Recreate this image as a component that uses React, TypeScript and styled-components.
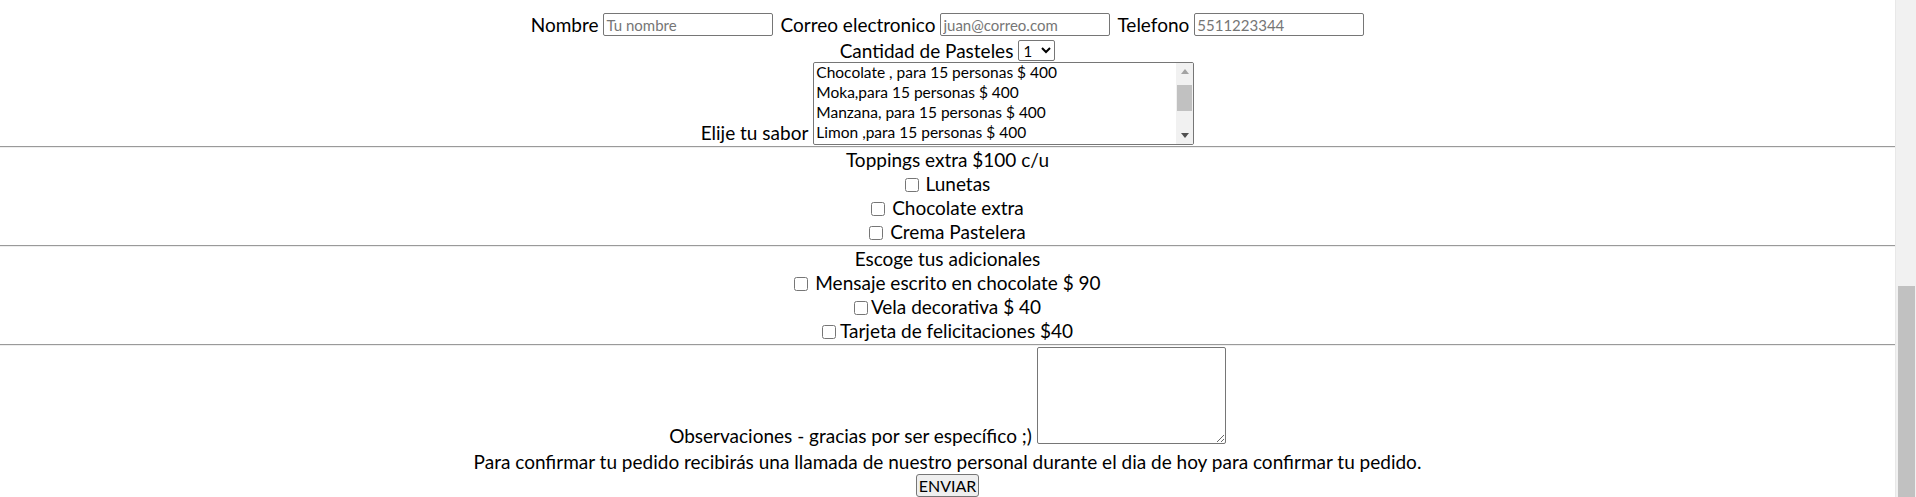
import React from "react";
import styled, { createGlobalStyle } from "styled-components";

const GlobalStyle = createGlobalStyle`
  html, body {
    margin: 0;
    padding: 0;
    height: 100%;
    overflow: hidden;
    background: #ffffff;
  }
  body {
    font-family: Lato, "Open Sans", sans-serif;
    color: #000000;
  }
`;

const Page = styled.div`
  display: flex;
  height: 497px;
`;

const Form = styled.form`
  flex: 1;
  display: flex;
  flex-direction: column;
  padding-top: 13px;
  font-size: 19px;
  text-align: center;
`;

const Row = styled.div<{ $align?: string; $top?: number }>`
  display: flex;
  justify-content: center;
  align-items: ${(p) => p.$align || "center"};
  margin-top: ${(p) => p.$top || 0}px;
`;

const Label = styled.label`
  margin-right: 5px;
  line-height: 20px;
`;

const TextInput = styled.input`
  width: 170px;
  height: 23px;
  box-sizing: border-box;
  border: 1px solid #767676;
  border-radius: 2px;
  padding: 1px 2px;
  margin: 0 7px 0 0;
  font-family: Lato, sans-serif;
  font-size: 15px;
  color: #000;

  &::placeholder {
    color: #767676;
  }

  &:last-child {
    margin-right: 0;
  }
`;

const Select = styled.select`
  height: 21px;
  width: 37px;
  font-family: Lato, sans-serif;
  font-size: 15px;
  border: 1px solid #767676;
  border-radius: 2px;
  background: #fff;
  color: #000;
  padding: 0;
`;

// listbox + its own little scrollbar
const ListFrame = styled.div`
  width: 381px;
  height: 83px;
  box-sizing: border-box;
  border: 1px solid #767676;
  border-radius: 2px;
  display: flex;
  overflow: hidden;
  background: #fff;
`;

const ListBox = styled.select`
  flex: 1;
  height: 100%;
  font-family: Lato, sans-serif;
  font-size: 15.5px;
  border: none;
  outline: none;
  padding: 0;
  overflow: hidden;
  text-align: left;

  option {
    line-height: 20px;
    padding: 0 2px;
    min-height: 20px;
  }
`;

const ListScroll = styled.div`
  width: 17px;
  background: #f1f1f1;
  display: flex;
  flex-direction: column;
  align-items: center;
`;

const ScrollButton = styled.div`
  width: 17px;
  height: 17px;
  display: flex;
  align-items: center;
  justify-content: center;
  flex: none;
`;

const ListTrack = styled.div`
  flex: 1;
  width: 100%;
  display: flex;
  justify-content: center;
`;

const ListThumb = styled.div`
  margin-top: 5px;
  width: 15px;
  height: 26px;
  background: #c1c1c1;
`;

const Divider = styled.hr`
  margin: 1px 0 0 0;
  border: none;
  border-top: 1px solid #9a9a9a;
  border-bottom: 1px solid #eeeeee;
  height: 0;
`;

const Section = styled.div`
  display: flex;
  flex-direction: column;
`;

const Line = styled.div`
  line-height: 24px;
  height: 24px;
`;

const Check = styled.input.attrs({ type: "checkbox" })<{ $gap?: number }>`
  width: 14px;
  height: 14px;
  margin: 0 ${(p) => (p.$gap === undefined ? 2 : p.$gap)}px 0 0;
  vertical-align: baseline;
  position: relative;
  top: 1px;
`;

const Notes = styled.textarea`
  width: 189px;
  height: 97px;
  box-sizing: border-box;
  border: 1px solid #767676;
  border-radius: 2px;
  margin: 0;
  font-family: Lato, sans-serif;
`;

const SideLabel = styled.label<{ $shift?: number }>`
  margin-right: 5px;
  line-height: 20px;
  position: relative;
  top: ${(p) => p.$shift || 0}px;
`;

const Message = styled.p`
  margin: 6px 0 0 0;
  line-height: 23px;
`;

const SendButton = styled.button`
  align-self: center;
  margin-top: 1px;
  height: 24px;
  padding: 0 2px;
  font-family: Lato, sans-serif;
  font-size: 16px;
  color: #000;
  background: #efefef;
  border: 1px solid #767676;
  border-radius: 3px;
`;

const ScrollTrack = styled.div`
  width: 21px;
  background: #f1f1f1;
  border-left: 1px solid #e8e8e8;
  box-sizing: border-box;
  display: flex;
  justify-content: center;
`;

const ScrollThumb = styled.div`
  margin-top: 286px;
  width: 17px;
  height: 211px;
  background: #c1c1c1;
`;

const sabores = [
  "Chocolate , para 15 personas $ 400",
  "Moka,para 15 personas $ 400",
  "Manzana, para 15 personas $ 400",
  "Limon ,para 15 personas $ 400",
  "Vainilla, para 15 personas $ 400",
  "Fresa, para 15 personas $ 400",
  "Tres leches, para 15 personas $ 400",
];

export default function App() {
  return (
    <>
      <GlobalStyle />
      <Page>
        <Form onSubmit={(e) => e.preventDefault()}>
          <Row>
            <Label htmlFor="nombre">Nombre</Label>
            <TextInput id="nombre" placeholder="Tu nombre" />
            <Label htmlFor="correo">Correo electronico</Label>
            <TextInput id="correo" placeholder="juan@correo.com" />
            <Label htmlFor="tel">Telefono</Label>
            <TextInput id="tel" placeholder="5511223344" />
          </Row>

          <Row $top={4}>
            <Label htmlFor="cantidad">Cantidad de Pasteles</Label>
            <Select id="cantidad" defaultValue="1">
              <option>1</option>
              <option>2</option>
              <option>3</option>
              <option>4</option>
              <option>5</option>
            </Select>
          </Row>

          <Row $top={1} $align="flex-end">
            <SideLabel htmlFor="sabor" $shift={-2}>
              Elije tu sabor
            </SideLabel>
            <ListFrame>
              <ListBox id="sabor" multiple size={4}>
                {sabores.map((s) => (
                  <option key={s}>{s}</option>
                ))}
              </ListBox>
              <ListScroll>
                <ScrollButton>
                  <svg width="8" height="5" viewBox="0 0 8 5">
                    <path d="M0 5h8L4 0z" fill="#a3a3a3" />
                  </svg>
                </ScrollButton>
                <ListTrack>
                  <ListThumb />
                </ListTrack>
                <ScrollButton>
                  <svg width="8" height="5" viewBox="0 0 8 5">
                    <path d="M0 0h8L4 5z" fill="#505050" />
                  </svg>
                </ScrollButton>
              </ListScroll>
            </ListFrame>
          </Row>

          <Divider />
          <Section>
            <Line>Toppings extra $100 c/u</Line>
            <Line>
              <Check /> Lunetas
            </Line>
            <Line>
              <Check /> Chocolate extra
            </Line>
            <Line>
              <Check /> Crema Pastelera
            </Line>
          </Section>

          <Divider />
          <Section>
            <Line>Escoge tus adicionales</Line>
            <Line>
              <Check /> Mensaje escrito en chocolate $ 90
            </Line>
            <Line>
              <Check $gap={3} />
              Vela decorativa $ 40
            </Line>
            <Line>
              <Check $gap={4} />
              Tarjeta de felicitaciones $40
            </Line>
          </Section>

          <Divider />
          <Row $top={1} $align="flex-end">
            <SideLabel htmlFor="obs" $shift={2}>
              Observaciones - gracias por ser específico ;)
            </SideLabel>
            <Notes id="obs" />
          </Row>
          <Message>
            Para confirmar tu pedido recibirás una llamada de nuestro personal
            durante el dia de hoy para confirmar tu pedido.
          </Message>
          <SendButton type="submit">ENVIAR</SendButton>
        </Form>
        <ScrollTrack>
          <ScrollThumb />
        </ScrollTrack>
      </Page>
    </>
  );
}
